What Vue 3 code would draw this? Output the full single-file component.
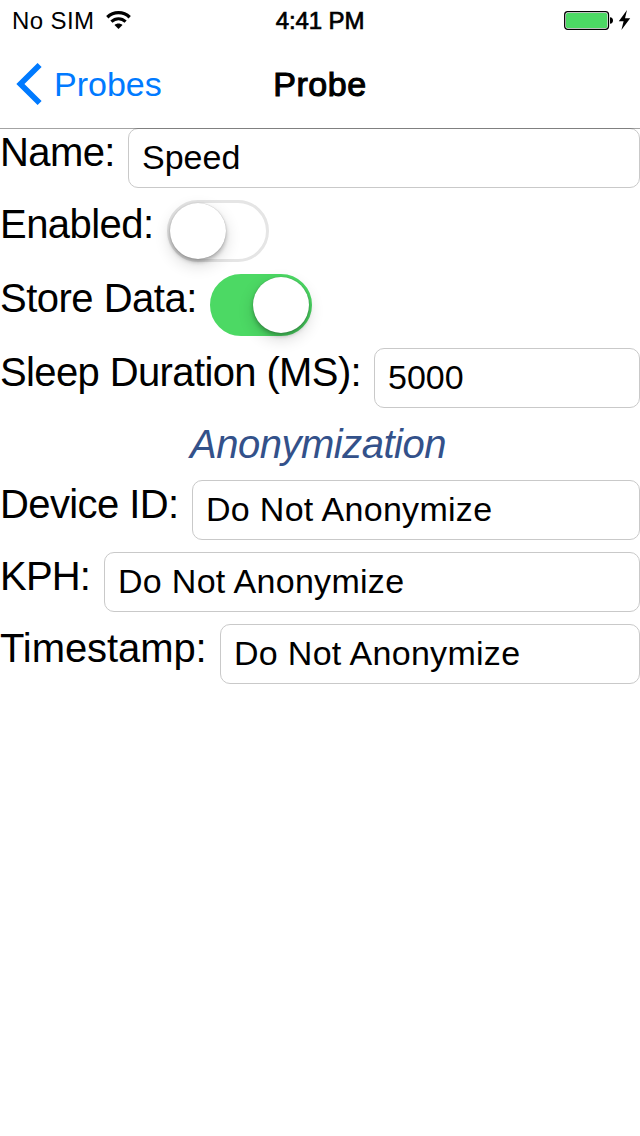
<script setup>
const rows = [
  { label: 'Name:', offset: 128, spacing: -0.6, type: 'field', value: 'Speed' },
  { label: 'Enabled:', offset: 167, spacing: -0.55, type: 'switch', on: false },
  { label: 'Store Data:', offset: 210, spacing: -0.5, type: 'switch', on: true },
  { label: 'Sleep Duration (MS):', offset: 374, spacing: -0.62, type: 'field', value: '5000' },
  { label: 'Anonymization', type: 'heading' },
  { label: 'Device ID:', offset: 192, spacing: -0.6, type: 'field', value: 'Do Not Anonymize', wide: true },
  { label: 'KPH:', offset: 104, spacing: -0.8, type: 'field', value: 'Do Not Anonymize', wide: true },
  { label: 'Timestamp:', offset: 220, spacing: -0.08, type: 'field', value: 'Do Not Anonymize', wide: true },
]
</script>

<template>
  <div class="screen">
    <header class="top">
      <div class="status">
        <div class="carrier">
          <span>No SIM</span>
          <svg class="wifi" width="26" height="19" viewBox="0 0 26 19">
            <path d="M1.300 6.200C7.600.200 17.400.200 23.700 6.200" fill="none" stroke="#000" stroke-width="3.300" />
            <path d="M5.400 10.600c4.100-3.900 10.100-3.900 14.200 0" fill="none" stroke="#000" stroke-width="3.100" />
            <path d="M12.500 18l-4-4.100c2.300-2 5.700-2 8 0z" />
          </svg>
        </div>
        <span class="time">4:41 PM</span>
        <svg class="battery" width="68" height="24" viewBox="0 0 68 24">
          <rect x=".7" y="3.700" width="43.800" height="17.600" rx="3" fill="#fff" stroke="#000" stroke-width="1.300" />
          <rect x="2" y="5" width="41.200" height="15" rx="1.600" fill="#4cd964" />
          <path d="M46 9.200c4 0 4 6.600 0 6.600z" />
          <path d="M63 2L54.800 13.200h4.800L57.400 22 66.200 10.300h-5.200z" />
        </svg>
      </div>
      <nav class="nav">
        <div class="back">
          <svg width="26" height="42" viewBox="0 0 26 42">
            <path d="M23.600 2L4.400 21l19.200 19" fill="none" stroke="#007aff" stroke-width="5.700" />
          </svg>
          <span>Probes</span>
        </div>
        <h1 class="title">Probe</h1>
      </nav>
    </header>

    <main class="form">
      <template v-for="row in rows" :key="row.label">
        <h2 v-if="row.type === 'heading'" class="heading">{{ row.label }}</h2>
        <div v-else class="row">
          <label class="label" :style="{ width: row.offset + 'px', letterSpacing: row.spacing + 'px' }">{{ row.label }}</label>
          <div v-if="row.type === 'field'" class="field" :class="{ wide: row.wide }">{{ row.value }}</div>
          <div v-else class="switch" :class="{ on: row.on }"><span class="thumb"></span></div>
        </div>
      </template>
    </main>
  </div>
</template>

<style>
body {
  background: #fff;
}
</style>

<style scoped>
.screen {
  width: 640px;
  height: 1136px;
  overflow: hidden;
  background: #fff;
  color: #000;
  font-family: "Liberation Sans", Arial, sans-serif;
}
.top {
  position: relative;
  z-index: 1;
  height: 128px;
  box-shadow: 0 1px 0 rgba(0, 0, 0, 0.36);
}
.status {
  display: grid;
  grid-template-columns: 1fr auto 1fr;
  height: 40px;
  padding: 0 8px 0 12px;
  font-size: 24px;
  line-height: 41px;
}
.carrier {
  display: flex;
  gap: 12px;
  letter-spacing: 0.4px;
}
.wifi {
  margin-top: 11px;
}
.time {
  margin-right: 4px;
  letter-spacing: -0.1px;
  -webkit-text-stroke: 0.7px #000;
}
.battery {
  justify-self: end;
  margin-top: 8px;
}
.nav {
  display: grid;
  grid-template-columns: 1fr auto 1fr;
  height: 88px;
  padding: 0 16px;
  font-size: 34px;
  line-height: 89px;
}
.back {
  display: flex;
  align-items: center;
  gap: 12px;
  color: #007aff;
}
.back svg {
  margin-top: -1px;
}
.title {
  margin: 0;
  font-size: 34px;
  font-weight: 400;
  letter-spacing: 0.6px;
  -webkit-text-stroke: 1.1px #000;
}
.form {
  display: flex;
  flex-direction: column;
  gap: 12px;
}
.row {
  display: flex;
}
.label {
  flex: none;
  height: 48px;
  font-size: 40px;
  line-height: 48px;
  white-space: nowrap;
}
.field {
  flex: 1;
  box-sizing: border-box;
  height: 60px;
  padding-left: 13px;
  border: 1px solid #c9c9c9;
  border-radius: 10px;
  font-size: 34px;
  line-height: 56px;
}
.field.wide {
  letter-spacing: 0.3px;
}
.heading {
  margin: 0;
  height: 48px;
  padding-right: 4px;
  font-size: 40px;
  font-weight: 400;
  font-style: italic;
  line-height: 48px;
  letter-spacing: -0.48px;
  text-align: center;
  color: #33518a;
}
.switch {
  box-sizing: border-box;
  display: flex;
  width: 102px;
  height: 62px;
  border: 3px solid #e5e5e5;
  border-radius: 31px;
}
.thumb {
  width: 56px;
  height: 56px;
  border-radius: 50%;
  background: #fff;
  box-shadow: 0 6px 16px rgba(0, 0, 0, 0.16), 0 3px 4px rgba(0, 0, 0, 0.25), 0 0 1px rgba(0, 0, 0, 0.3);
}
.switch.on {
  justify-content: flex-end;
  border-color: #4cd964;
  background: #4cd964;
}
</style>
